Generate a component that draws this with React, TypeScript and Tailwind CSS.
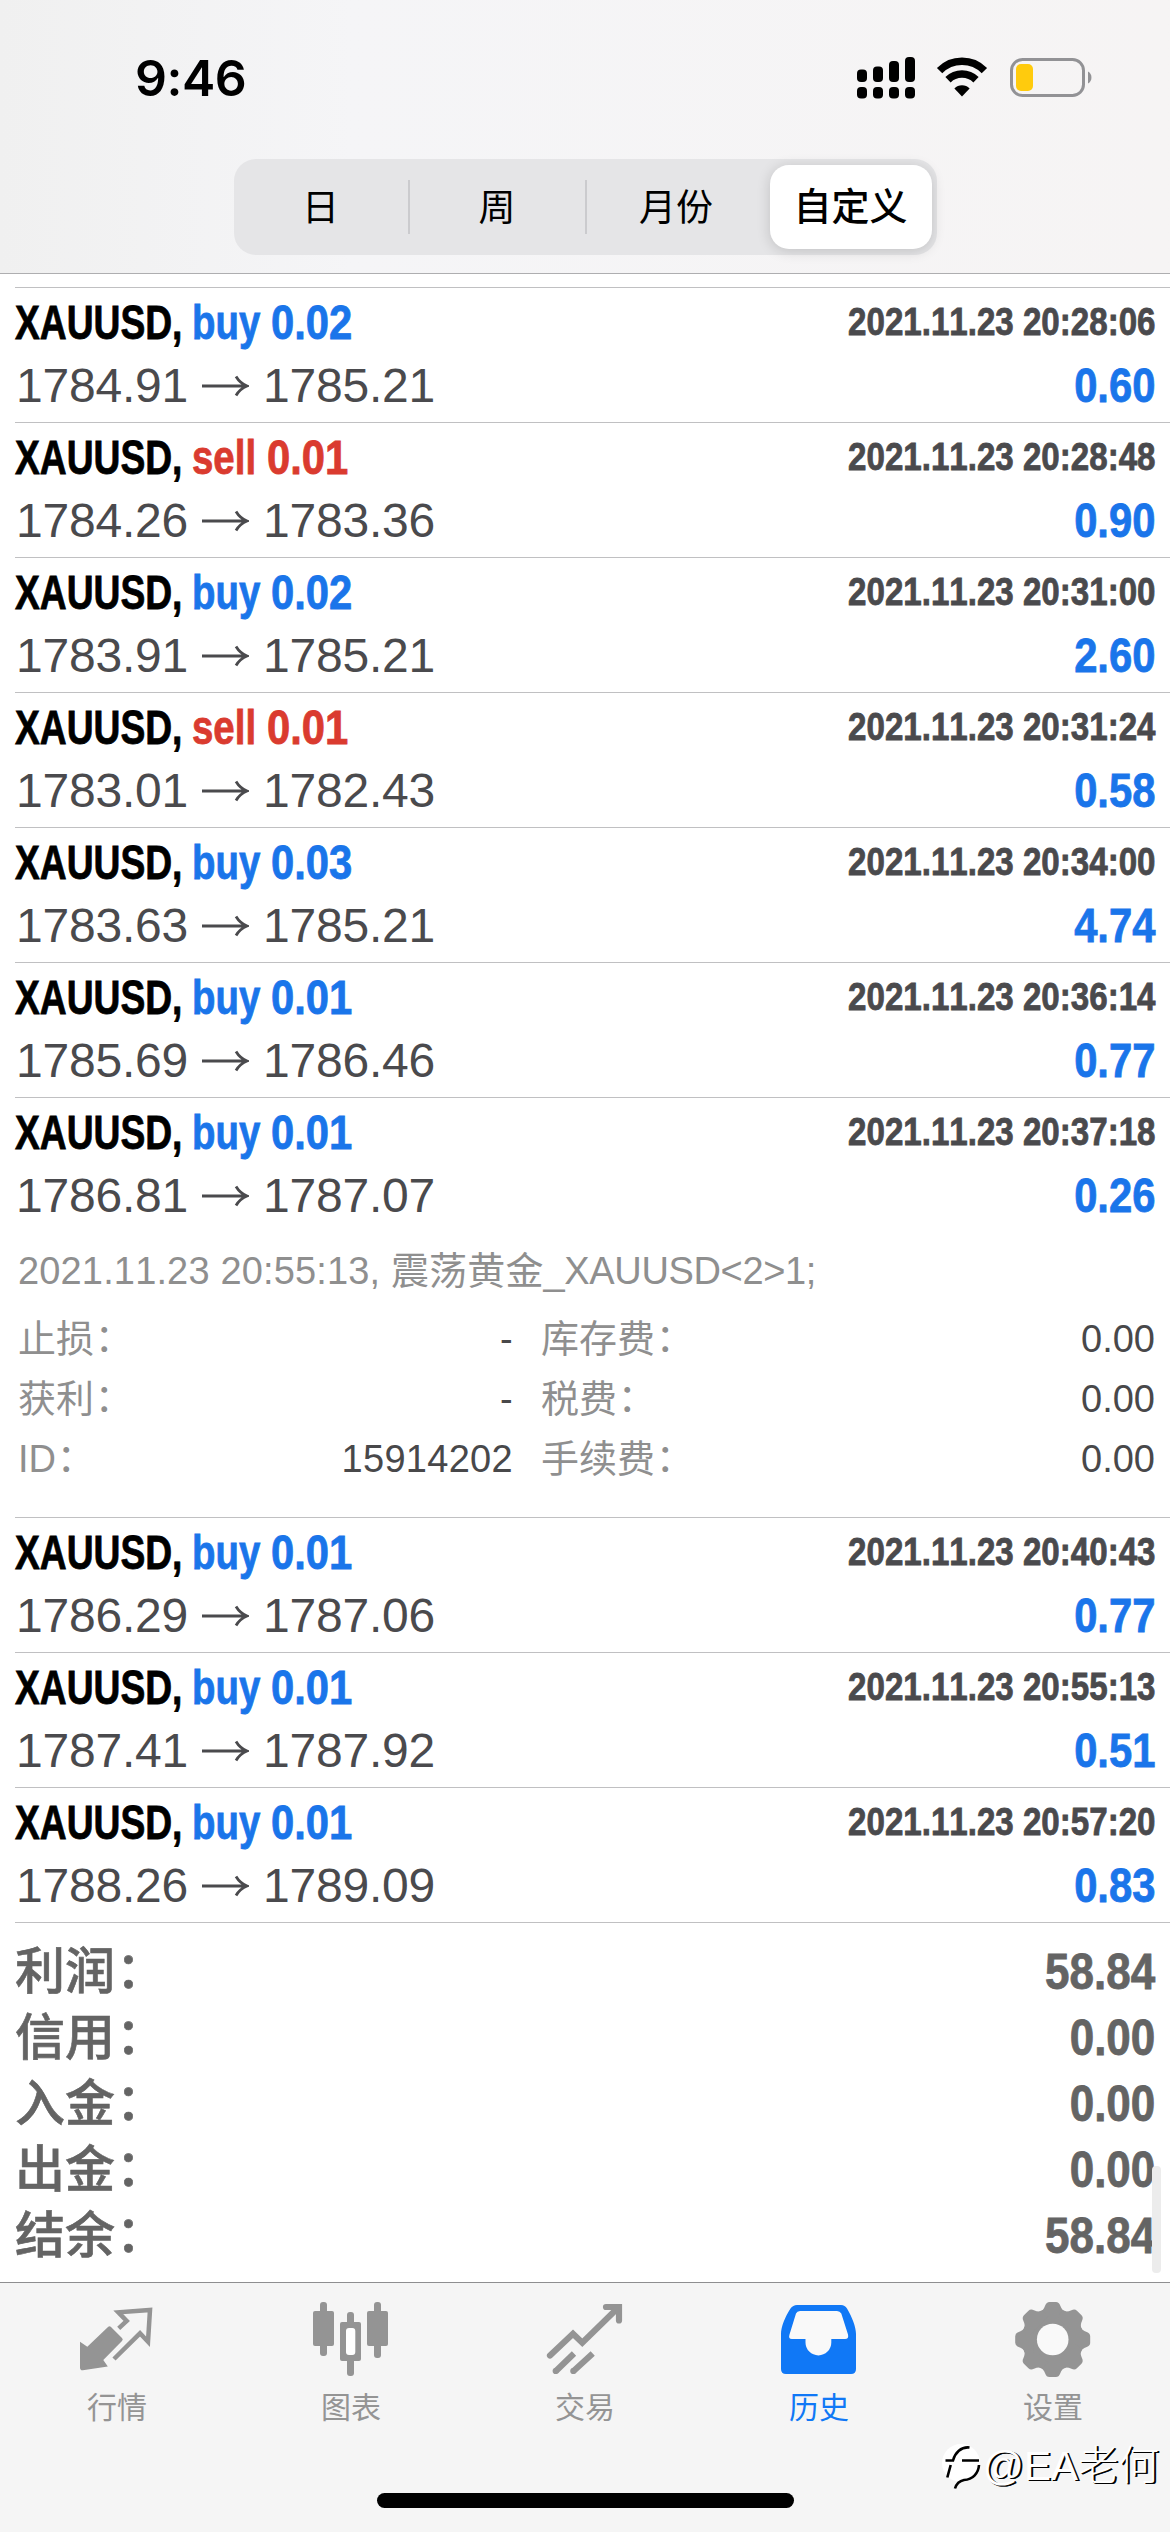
import type { ReactNode } from 'react'
import clsx from 'clsx'

interface Deal {
  side: 'buy' | 'sell'
  volume: string
  open: string
  close: string
  time: string
  profit: string
  expanded?: boolean
}

const deals: Deal[] = [
  { side: 'buy', volume: '0.02', open: '1784.91', close: '1785.21', time: '2021.11.23 20:28:06', profit: '0.60' },
  { side: 'sell', volume: '0.01', open: '1784.26', close: '1783.36', time: '2021.11.23 20:28:48', profit: '0.90' },
  { side: 'buy', volume: '0.02', open: '1783.91', close: '1785.21', time: '2021.11.23 20:31:00', profit: '2.60' },
  { side: 'sell', volume: '0.01', open: '1783.01', close: '1782.43', time: '2021.11.23 20:31:24', profit: '0.58' },
  { side: 'buy', volume: '0.03', open: '1783.63', close: '1785.21', time: '2021.11.23 20:34:00', profit: '4.74' },
  { side: 'buy', volume: '0.01', open: '1785.69', close: '1786.46', time: '2021.11.23 20:36:14', profit: '0.77' },
  { side: 'buy', volume: '0.01', open: '1786.81', close: '1787.07', time: '2021.11.23 20:37:18', profit: '0.26', expanded: true },
  { side: 'buy', volume: '0.01', open: '1786.29', close: '1787.06', time: '2021.11.23 20:40:43', profit: '0.77' },
  { side: 'buy', volume: '0.01', open: '1787.41', close: '1787.92', time: '2021.11.23 20:55:13', profit: '0.51' },
  { side: 'buy', volume: '0.01', open: '1788.26', close: '1789.09', time: '2021.11.23 20:57:20', profit: '0.83' },
]

const details = [
  { left: '止损', leftValue: '-', right: '库存费', rightValue: '0.00' },
  { left: '获利', leftValue: '-', right: '税费', rightValue: '0.00' },
  { left: 'ID', leftValue: '15914202', right: '手续费', rightValue: '0.00' },
]

const totals = [
  { label: '利润', value: '58.84' },
  { label: '信用', value: '0.00' },
  { label: '入金', value: '0.00' },
  { label: '出金', value: '0.00' },
  { label: '结余', value: '58.84' },
]

function StatusBar() {
  return (
    <div className="flex h-[159px] items-start justify-between pr-[77px] pl-[135px]">
      <div className="mt-[47px] font-['Inter',sans-serif] text-[50px] leading-[62px] font-semibold tracking-[-0.5px] text-black">
        9:46
      </div>
      <div className="mt-[56px] flex items-start">
        <svg width="60" height="44" viewBox="0 0 60 44">
          {[13.5, 10.5, 5, 1].map((y, i) => (
            <g key={y}>
              <rect x={i * 16} y={y} width="10" height={26 - y} rx="4" />
              <rect x={i * 16} y="31" width="10" height="11.5" rx="4" />
            </g>
          ))}
        </svg>
        <svg width="52" height="42" viewBox="0 0 52 42" className="ml-[19px]">
          <g fill="none" stroke="#000" strokeWidth="7.5">
            <path d="M3.6 14.6a31.5 31.5 0 0 1 44.8 0" />
            <path d="M12 23.8a20 20 0 0 1 28 0" />
          </g>
          <path d="M26 40.5 18.4 32.4a10.8 10.8 0 0 1 15.2 0Z" />
        </svg>
        <svg width="84" height="44" viewBox="0 0 84 44" className="ml-[21px]">
          <rect x="2.5" y="3.5" width="72" height="36" rx="11" fill="none" stroke="#929295" strokeWidth="3" />
          <rect x="7" y="8" width="17" height="27" rx="5" fill="#ffcb0d" />
          <path d="M79 15.5c4.6 1.8 4.6 10.2 0 12Z" fill="#929295" />
        </svg>
      </div>
    </div>
  )
}

function PeriodTabs() {
  return (
    <div className="mx-auto flex h-24 w-[703px] items-center rounded-[22px] bg-[#e5e5e7] pr-[5px] text-[37px] leading-[84px] text-black">
      <div className="w-[174px] pt-1 text-center">日</div>
      <div className="h-[54px] w-[2px] bg-[#cbcbce]" />
      <div className="w-[175px] pt-1 text-center">周</div>
      <div className="h-[54px] w-[2px] bg-[#cbcbce]" />
      <div className="flex-1 pt-1 pr-1 text-center">月份</div>
      <div className="h-[84px] w-[162px] rounded-[19px] bg-white text-center text-[38px] font-medium shadow-[0_2px_14px_rgba(0,0,0,0.16)]">
        自定义
      </div>
    </div>
  )
}

// Condensed bold face, squeezed out of the regular-width one.
function Condensed({ className, children }: { className?: string; children: ReactNode }) {
  return (
    <span className={clsx('inline-block whitespace-pre font-bold [-webkit-text-stroke:0.8px_currentColor]', className)}>
      {children}
    </span>
  )
}

// Label followed by a full-width colon that sits on the middle of the characters.
function Label({ className, children }: { className?: string; children: ReactNode }) {
  return (
    <span className={className}>
      {children}
      <span className="relative -top-[0.03em] left-[0.02em]">：</span>
    </span>
  )
}

function DealDetails() {
  return (
    <div className="pr-[15px] pl-[3px] text-[38px] text-[#8f8f8f]">
      <div className="mt-[13px] h-[63px] leading-[64px] tracking-[0.15px]">
        2021.11.23 20:55:13, 震荡黄金<span className="tracking-[-0.35px]">_XAUUSD&lt;2&gt;1;</span>
      </div>
      <div className="mt-[7px]">
        {details.map((d) => (
          <div key={d.left} className="flex h-[60px] leading-[60px]">
            <Label className="w-[200px]">{d.left}</Label>
            <span className="w-[295px] text-right tracking-[0.3px] text-[#48484a]">{d.leftValue}</span>
            <Label className="ml-7 flex-1">{d.right}</Label>
            <span className="text-[#48484a]">{d.rightValue}</span>
          </div>
        ))}
      </div>
    </div>
  )
}

function DealRow({ deal }: { deal: Deal }) {
  return (
    <div className={clsx('border-t border-[#c0c0c2]', deal.expanded ? 'h-[420px]' : 'h-[135px]')}>
      <div className="flex h-[68px] items-start justify-between pt-[5px] pr-[15px]">
        <div className="flex text-[48px] leading-[60px]">
          <Condensed className="w-[177px] origin-left scale-x-[0.775] text-black">XAUUSD,</Condensed>
          <div className={clsx('flex', deal.side === 'buy' ? 'text-[#1a75ea]' : 'text-[#da3b2f]')}>
            <Condensed
              className={clsx('origin-left scale-x-[0.8]', deal.side === 'buy' ? 'w-[79px]' : 'w-[75px]')}
            >
              {deal.side}
            </Condensed>
            <Condensed className="origin-left scale-x-[0.87]">{deal.volume}</Condensed>
          </div>
        </div>
        <Condensed className="origin-right scale-x-[0.86] text-[38.5px] leading-[58px] text-[#4a4a4d]">
          {deal.time}
        </Condensed>
      </div>
      <div className="flex h-[60px] justify-between pr-[15px] text-[48px] leading-[60px]">
        <div className="flex items-center pl-px text-[#4a4a4d]">
          <span className="w-[186px] tracking-[-0.2px]">{deal.open}</span>
          <svg width="47" height="24" viewBox="0 0 47 24" fill="none" stroke="#4a4a4d" strokeWidth="2.8">
            <path d="M0 12h45M34 2.5c3 5 6 7.500 11 9.500c-5 2-8 4.500-11 9.500" />
          </svg>
          <span className="ml-[14px] tracking-[-0.2px]">{deal.close}</span>
        </div>
        <Condensed className="origin-right scale-x-[0.87] text-[#1a75ea]">{deal.profit}</Condensed>
      </div>
      {deal.expanded && <DealDetails />}
    </div>
  )
}

function Totals() {
  return (
    <div className="border-t border-[#c0c0c2] pt-[16px] pr-[15px] text-[#646464]">
      {totals.map((t) => (
        <div key={t.label} className="flex h-[66px] justify-between text-[50px] leading-[66px]">
          <Label className="font-medium [-webkit-text-stroke:0.6px_currentColor]">{t.label}</Label>
          <Condensed className="origin-right scale-x-[0.88]">{t.value}</Condensed>
        </div>
      ))}
    </div>
  )
}

function QuotesIcon() {
  return (
    <svg width="80" height="80" viewBox="0 0 80 80">
      <path
        d="M3 41.700 10.300 46.700 31 27q1.500-1.500 3 0L45 38q1.500 1.500 0 3L26.300 60l4.500 6.500-25 3.800Q3 70.500 3 67.500Z"
        fill="currentColor"
      />
      <path
        d="M41.700 28.300 49.700 21 41.300 12.300 73 10 71 41.700 63 33.300 37 59"
        fill="none"
        stroke="currentColor"
        strokeWidth="4.500"
      />
    </svg>
  )
}

function ChartIcon() {
  return (
    <svg width="80" height="80" viewBox="0 0 80 80" fill="currentColor">
      <rect x="9" y="2" width="7" height="54" rx="3" />
      <rect x="2" y="11" width="21" height="35" rx="2" />
      <rect x="36" y="12" width="7" height="64" rx="3" />
      <rect x="29" y="22" width="21" height="39" rx="2" />
      <rect x="35" y="28" width="9.300" height="27" rx="3" fill="#fff" />
      <rect x="63" y="2" width="7" height="56" rx="3" />
      <rect x="56" y="11" width="21" height="35" rx="2" />
    </svg>
  )
}

function TradeIcon() {
  return (
    <svg width="80" height="80" viewBox="0 0 80 80" fill="none" stroke="currentColor" strokeWidth="6.200">
      <path d="M5 55.500 28 33.700 37.300 42.700 73.300 7.500" strokeLinecap="round" />
      <path d="M61 7h13v13.500" strokeLinecap="round" />
      <path d="M10.700 71.300 29 53.500M28.300 71.300 47.700 53.500" />
      <g fill="currentColor" stroke="none">
        <circle cx="10.700" cy="71" r="3.100" />
        <circle cx="28.300" cy="71" r="3.100" />
      </g>
    </svg>
  )
}

function HistoryIcon() {
  return (
    <svg width="80" height="80" viewBox="0 0 80 80">
      <path
        d="M18 5H62q4 0 6 3.500C73 17 77 27 77 34V69q0 5-5 5H7q-5 0-5-5V34C2 27 6 17 11.500 8.500Q14 5 18 5Z"
        fill="currentColor"
      />
      <path
        d="M21 11H58q3 0 4.300 2.500L69 34.500Q70 39 66 39H52.300V42.500a12.900 12.900 0 0 1-25.800 0V39H13Q9 39 10.500 34.500L17 13.500Q18 11 21 11Z"
        fill="#f9f9f9"
      />
    </svg>
  )
}

function SettingsIcon() {
  return (
    <svg width="80" height="80" viewBox="0 0 80 80" fill="currentColor">
      <circle cx="39.700" cy="39.500" r="31" />
      {[0, 45, 90, 135, 180, 225, 270, 315].map((angle) => (
        <path
          key={angle}
          transform={`rotate(${angle} 39.700 39.500)`}
          d="M26.500 12Q30.500 10.500 32.200 5.500Q33.500 2 36.500 2H43Q46 2 47.200 5.500Q49 10.500 53 12V20H26.500Z"
        />
      ))}
      <circle cx="39.700" cy="39.500" r="15.800" fill="#f9f9f9" />
    </svg>
  )
}

const tabs = [
  { label: '行情', icon: <QuotesIcon /> },
  { label: '图表', icon: <ChartIcon /> },
  { label: '交易', icon: <TradeIcon /> },
  { label: '历史', icon: <HistoryIcon />, active: true },
  { label: '设置', icon: <SettingsIcon /> },
]

function Watermark() {
  return (
    <div className="absolute right-[11px] bottom-[39px] flex items-center text-[40.5px] leading-[54px] font-light text-white [text-shadow:1.5px_0.5px_0_#000,2px_1px_0_#222]">
      <svg width="43" height="52" viewBox="0 0 43 52" fill="none">
        <circle cx="21" cy="23" r="19" fill="#fff" />
        <g stroke="#000" strokeWidth="2.6">
          <path d="M5.500 20.500H13C15 13 21 6.500 29.500 7.500" />
          <path d="M22 20.500H39M10.700 25 7.300 37.500" />
          <path d="M39 25C38.500 33 33 39.500 24 40C19 41 16.500 43.500 15 48.500" />
        </g>
      </svg>
      <span>@EA老何</span>
    </div>
  )
}

export default function App() {
  return (
    <div className="relative flex h-[2532px] w-[1170px] flex-col overflow-hidden bg-white font-['Liberation_Sans','Noto_Sans_CJK_SC',sans-serif] [font-kerning:none]">
      <header className="h-[274px] shrink-0 border-b border-[#aeaeb0] bg-linear-to-r from-[#f0f0f0] via-[#f5f5f7] via-30% to-[#f6f4f4]">
        <StatusBar />
        <PeriodTabs />
      </header>

      <main className="relative flex-1 pt-[13px] pl-[15px]">
        {deals.map((deal) => (
          <DealRow key={deal.time} deal={deal} />
        ))}
        <Totals />
        <div className="absolute right-[9px] bottom-[9px] h-[107px] w-[9px] rounded bg-[#ececec]" />
      </main>

      <nav className="flex h-[250px] shrink-0 border-t border-[#8e8e90] bg-[#f5f5f5] pt-[17px]">
        {tabs.map((tab) => (
          <div
            key={tab.label}
            className={clsx('flex flex-1 flex-col items-center', tab.active ? 'text-[#1078f6]' : 'text-[#949494]')}
          >
            {tab.icon}
            <span className="mt-[6px] text-[30px] leading-[44px]">{tab.label}</span>
          </div>
        ))}
      </nav>

      <div className="absolute bottom-6 left-[377px] h-[15px] w-[417px] rounded-full bg-black" />
      <Watermark />
    </div>
  )
}
